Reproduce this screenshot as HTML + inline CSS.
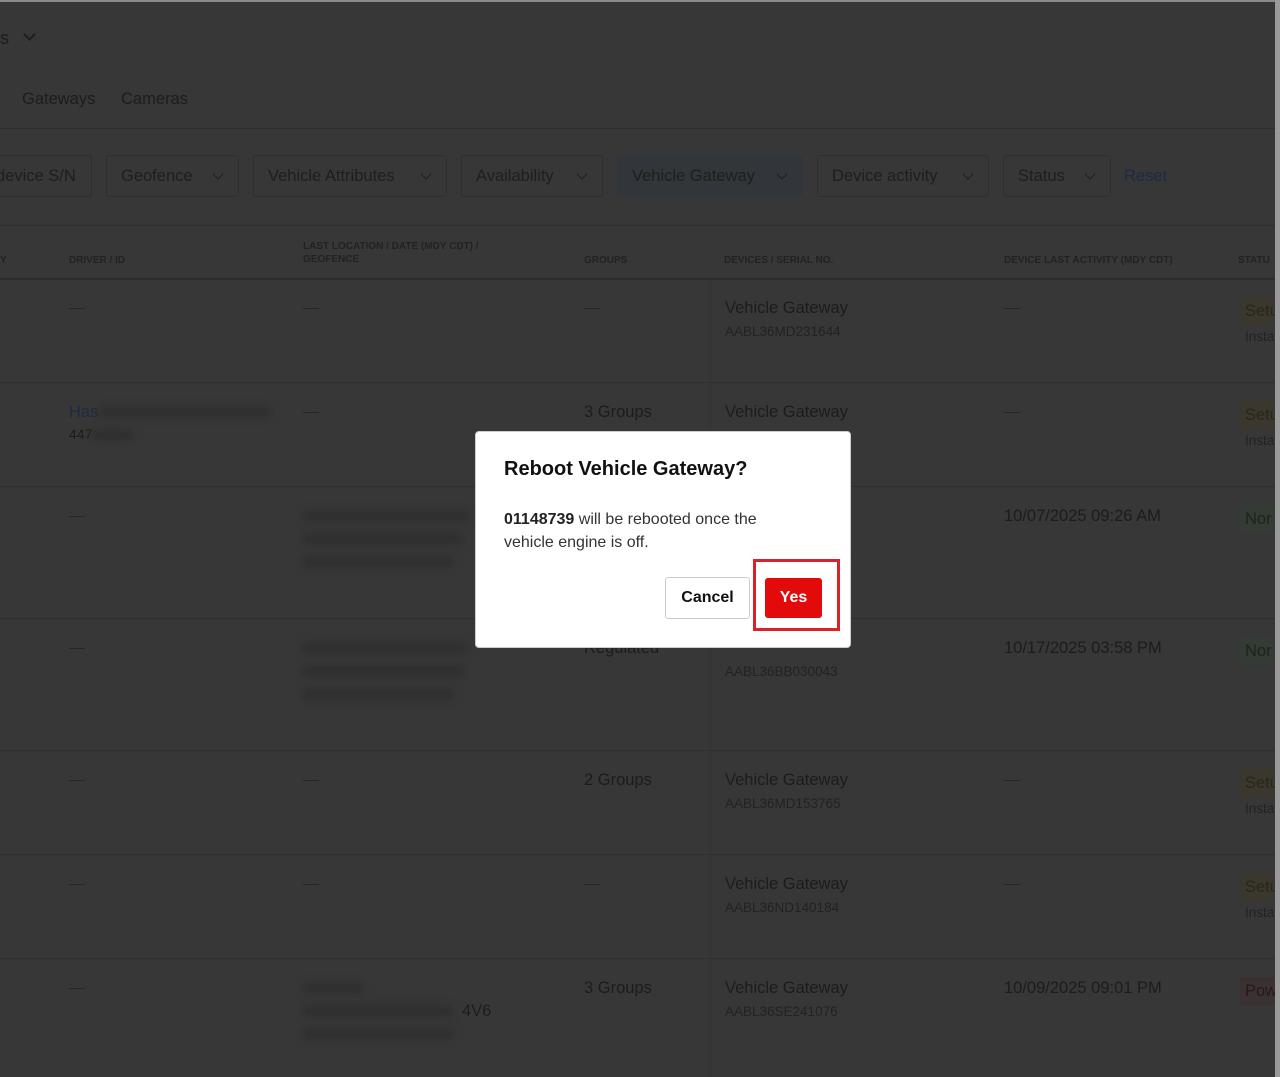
<!DOCTYPE html>
<html><head><style>
*{margin:0;padding:0;box-sizing:border-box}
body{width:1280px;height:1077px;background:#373737;font-family:"Liberation Sans",sans-serif;color:#1c1c1c;position:relative;overflow:hidden}
.a{position:absolute;white-space:nowrap}
.t{font-size:16.5px}
.s{font-size:13.5px;color:#222}
.h{font-size:10px;font-weight:bold;color:#222;line-height:13px}
.f{position:absolute;top:155px;height:42px;border:1px solid #2e2e2e;border-radius:3px;font-size:16.5px;line-height:40px;padding-left:14px;color:#1e1e1e}
.f.c:after{content:"";position:absolute;right:16px;top:14px;width:7px;height:7px;border-right:1.5px solid #1e1e1e;border-bottom:1.5px solid #1e1e1e;transform:rotate(45deg)}
.ln{position:absolute;left:0;width:1275px;height:1px;background:#2f2f2f}
.d{position:absolute;width:16px;height:1px;background:#262626}
.b{position:absolute;filter:blur(4px);background:#2e2e2e;height:10px}
</style></head><body>
<div style="position:absolute;left:0;top:0;width:1280px;height:2px;background:#8a8a8a;z-index:5"></div>
<div class="a t" style="left:0;top:28px;font-size:18px">s</div>
<div style="position:absolute;left:25px;top:30px;width:9px;height:9px;border-right:2px solid #1e1e1e;border-bottom:2px solid #1e1e1e;transform:rotate(45deg)"></div>
<div class="a t" style="left:22px;top:90px">Gateways</div>
<div class="a t" style="left:121px;top:90px">Cameras</div>
<div class="ln" style="top:128px"></div>
<div class="f" style="left:-4px;width:96px;padding-left:0;border-left:none">device S/N</div>
<div class="f c" style="left:106px;width:133px">Geofence</div>
<div class="f c" style="left:253px;width:194px">Vehicle Attributes</div>
<div class="f c" style="left:461px;width:142px">Availability</div>
<div class="f c" style="left:617px;width:186px;background:#323539;border-color:#2e3640">Vehicle Gateway</div>
<div class="f c" style="left:817px;width:172px">Device activity</div>
<div class="f c" style="left:1003px;width:108px">Status</div>
<div class="a t" style="left:1124px;top:167px;color:#1d2a44">Reset</div>
<div class="ln" style="top:225px"></div>
<div class="a h" style="left:0;top:254px">Y</div>
<div class="a h" style="left:69px;top:254px">DRIVER / ID</div>
<div class="a h" style="left:303px;top:240px">LAST LOCATION / DATE (MDY CDT) /<br>GEOFENCE</div>
<div class="a h" style="left:584px;top:254px">GROUPS</div>
<div class="a h" style="left:724px;top:254px">DEVICES / SERIAL NO.</div>
<div class="a h" style="left:1004px;top:254px">DEVICE LAST ACTIVITY (MDY CDT)</div>
<div class="a h" style="left:1238px;top:254px">STATU</div>
<div class="ln" style="top:278px;background:#2c2c2c;height:2px"></div>
<div class="ln" style="top:382px"></div><div class="ln" style="top:486px"></div><div class="ln" style="top:618px"></div><div class="ln" style="top:750px"></div><div class="ln" style="top:854px"></div><div class="ln" style="top:958px"></div>
<div style="position:absolute;left:710px;top:280px;width:1px;height:797px;background:#333"></div>

<div class="d" style="left:69px;top:308px"></div><div class="d" style="left:303px;top:308px"></div><div class="d" style="left:584px;top:308px"></div><div class="d" style="left:1004px;top:308px"></div>
<div class="a t" style="left:725px;top:299px">Vehicle Gateway</div><div class="a s" style="left:725px;top:324px">AABL36MD231644</div>
<div class="a t" style="left:1240px;top:297px;height:28px;line-height:28px;background:#3a372f;padding:0 5px;color:#2a2516">Setu</div><div class="a s" style="left:1245px;top:329px">Insta</div>

<div class="a t" style="left:69px;top:403px;color:#1d2a44">Has</div><div class="b" style="left:100px;top:407px;width:170px"></div>
<div class="a t" style="left:69px;top:426px;font-size:14px">447</div><div class="b" style="left:92px;top:430px;width:40px"></div>
<div class="d" style="left:303px;top:412px"></div>
<div class="a t" style="left:584px;top:403px">3 Groups</div>
<div class="a t" style="left:725px;top:403px">Vehicle Gateway</div><div class="d" style="left:1004px;top:412px"></div>
<div class="a t" style="left:1240px;top:401px;height:28px;line-height:28px;background:#3a372f;padding:0 5px;color:#2a2516">Setu</div><div class="a s" style="left:1245px;top:433px">Insta</div>

<div class="d" style="left:69px;top:516px"></div>
<div class="b" style="left:303px;top:511px;width:165px"></div><div class="b" style="left:303px;top:534px;width:160px"></div><div class="b" style="left:303px;top:557px;width:150px"></div>
<div class="a t" style="left:1004px;top:507px">10/07/2025 09:26 AM</div>
<div class="a t" style="left:1240px;top:505px;height:28px;line-height:28px;background:#343a34;padding:0 5px;color:#18261a">Nor</div>

<div class="d" style="left:69px;top:648px"></div>
<div class="b" style="left:303px;top:643px;width:165px"></div><div class="b" style="left:303px;top:666px;width:160px"></div><div class="b" style="left:303px;top:689px;width:150px"></div>
<div class="a t" style="left:584px;top:639px">Regulated</div>
<div class="a s" style="left:725px;top:664px">AABL36BB030043</div>
<div class="a t" style="left:1004px;top:639px">10/17/2025 03:58 PM</div>
<div class="a t" style="left:1240px;top:637px;height:28px;line-height:28px;background:#343a34;padding:0 5px;color:#18261a">Nor</div>

<div class="d" style="left:69px;top:780px"></div><div class="d" style="left:303px;top:780px"></div>
<div class="a t" style="left:584px;top:771px">2 Groups</div>
<div class="a t" style="left:725px;top:771px">Vehicle Gateway</div><div class="a s" style="left:725px;top:796px">AABL36MD153765</div><div class="d" style="left:1004px;top:780px"></div>
<div class="a t" style="left:1240px;top:769px;height:28px;line-height:28px;background:#3a372f;padding:0 5px;color:#2a2516">Setu</div><div class="a s" style="left:1245px;top:801px">Insta</div>

<div class="d" style="left:69px;top:884px"></div><div class="d" style="left:303px;top:884px"></div><div class="d" style="left:584px;top:884px"></div>
<div class="a t" style="left:725px;top:875px">Vehicle Gateway</div><div class="a s" style="left:725px;top:900px">AABL36ND140184</div><div class="d" style="left:1004px;top:884px"></div>
<div class="a t" style="left:1240px;top:873px;height:28px;line-height:28px;background:#3a372f;padding:0 5px;color:#2a2516">Setu</div><div class="a s" style="left:1245px;top:905px">Insta</div>

<div class="d" style="left:69px;top:988px"></div>
<div class="b" style="left:303px;top:983px;width:60px"></div><div class="b" style="left:303px;top:1006px;width:150px"></div><div class="a t" style="left:462px;top:1002px">4V6</div><div class="b" style="left:303px;top:1029px;width:150px"></div>
<div class="a t" style="left:584px;top:979px">3 Groups</div>
<div class="a t" style="left:725px;top:979px">Vehicle Gateway</div><div class="a s" style="left:725px;top:1004px">AABL36SE241076</div>
<div class="a t" style="left:1004px;top:979px">10/09/2025 09:01 PM</div>
<div class="a t" style="left:1240px;top:977px;height:28px;line-height:28px;background:#3a3232;padding:0 5px;color:#2a1616">Pow</div>

<div style="position:absolute;left:1275px;top:0;width:5px;height:1077px;background:#9a9a9a;z-index:5"></div>

<div style="position:absolute;left:475px;top:431px;width:376px;height:217px;background:#fff;border-radius:4px;border:1px solid #ccc;z-index:6">
<div class="a" style="left:28px;top:26px;font-size:20px;font-weight:bold;color:#111">Reboot Vehicle Gateway?</div>
<div class="a" style="left:28px;top:76px;font-size:16px;line-height:23px;color:#333"><b style="color:#222">01148739</b> will be rebooted once the<br>vehicle engine is off.</div>
<div style="position:absolute;left:189px;top:145px;width:85px;height:42px;border:1px solid #ccc;border-radius:3px;font-size:16px;font-weight:bold;color:#111;text-align:center;line-height:40px">Cancel</div>
<div style="position:absolute;left:277px;top:127px;width:87px;height:72px;border:3px solid #d8232a"></div>
<div style="position:absolute;left:289px;top:146px;width:57px;height:40px;background:#e20a0a;border-radius:3px;font-size:16px;font-weight:bold;color:#fff;text-align:center;line-height:40px">Yes</div>
</div>
</body></html>
